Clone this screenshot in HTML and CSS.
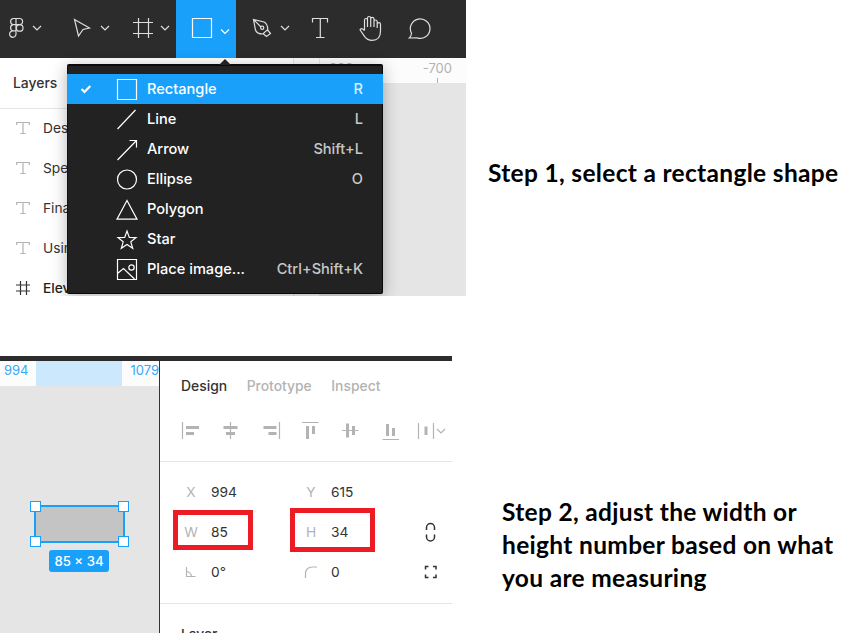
FILE: index.html
```html
<!DOCTYPE html>
<html lang="en">
<head>
<meta charset="utf-8">
<title>Measuring with a rectangle</title>
<link rel="stylesheet" href="styles.css">
</head>
<body>
<main class="guide">
  <section class="step step-one">
    <div class="editor">
      <nav class="toolbar">
        <svg class="tool" width="56" height="58" viewBox="0 0 56 58"><path d="M16 18.5h-3a3.2 3.2 0 0 0 0 6.2h3zM16 18.5h3.500a3.100 3.100 0 0 1 0 6.200H16M16 24.700h-3a3.200 3.200 0 0 0 0 6.200h3zM16 30.900h-3a3.200 3.200 0 1 0 3 3.200z"/><circle cx="19.700" cy="27.900" r="3.300"/><path d="M33 26l4 4 4-4"/></svg>
        <svg class="tool" width="60" height="58" viewBox="56 0 60 58"><path d="M74.500 19.500l15 8.500-6.500 1.500-4.500 6.500zM101 26l4 4 4-4"/></svg>
        <svg class="tool" width="60" height="58" viewBox="116 0 60 58"><path d="M138.500 18v20M148.500 18v20M133 22.500h20M133 33.500h20M161 26l4 4 4-4"/></svg>
        <svg class="tool tool-active" width="60" height="58" viewBox="176 0 60 58"><path d="M192.500 18.500h19v19h-19zM221 29.500l4 4 4-4"/></svg>
        <svg class="tool" width="60" height="58" viewBox="236 0 60 58"><path d="M253.500 19.500l10.500 2.500c2.500 1 3.500 3 3.800 7.500l-5 4.500c-4 0-6.500-1.500-7.300-4zM253.500 19.500l7.500 7.500M267.500 30l3 3.500-4 3-3.500-3"/><circle cx="262.200" cy="27.800" r="1.600"/><path d="M281 26l4 4 4-4"/></svg>
        <svg class="tool" width="49" height="58" viewBox="296 0 49 58"><path d="M312.500 22.500v-4h15v4M320.300 18.500v19M316 37.500h8.500"/></svg>
        <svg class="tool" width="50" height="58" viewBox="345 0 50 58"><path d="M364.500 30.500V20.300q0-1.800 1.500-1.800t1.500 1.800V27M367.500 20v-2q0-1.500 1.600-1.500t1.600 1.500v9M370.700 19q0-1.600 1.600-1.600T374 19v8M374 21.500q.2-1.500 1.600-1.500t1.600 1.500V28M377.200 24q.3-1.400 1.800-1.400t1.500 1.600V31c0 6-3 9.300-8.300 9.300-4 0-6-1.500-7.700-4l-4.500-6.500c.8-1.800 2.500-1.600 4.500.7"/></svg>
        <svg class="tool" width="50" height="58" viewBox="395 0 50 58"><path d="M411.500 33.200A9.800 9.800 0 1 1 417 37.900L409.300 38q2-2 2.200-4.800z"/></svg>
      </nav>
      <div class="workspace">
        <aside class="layers">
          <h2 class="layers-title">Layers</h2>
          <div class="layer"><svg class="layer-icon" width="14" height="14"><path d="M.7 4V1.500h12.600V4M7 1.500v11M4.500 12.500h5"/></svg>Design system</div>
          <div class="layer"><svg class="layer-icon" width="14" height="14"><path d="M.7 4V1.500h12.600V4M7 1.500v11M4.500 12.500h5"/></svg>Specs</div>
          <div class="layer"><svg class="layer-icon" width="14" height="14"><path d="M.7 4V1.500h12.600V4M7 1.500v11M4.500 12.500h5"/></svg>Final</div>
          <div class="layer"><svg class="layer-icon" width="14" height="14"><path d="M.7 4V1.500h12.600V4M7 1.500v11M4.500 12.500h5"/></svg>Using</div>
          <div class="layer layer-frame"><svg class="layer-icon" width="14" height="14"><path d="M4.500 0v14M10.500 0v14M0 4h14M0 10h14"/></svg>Elevation</div>
        </aside>
        <div class="side-ruler"></div>
        <div class="canvas">
          <div class="ruler"><span class="ruler-mark">-800</span><span class="ruler-mark">-700</span></div>
        </div>
      </div>
      <div class="menu">
        <div class="menu-item menu-item-active"><svg class="check" width="12" height="12"><path d="M1.500 6l3 3L10.300 3"/></svg><svg class="shape" width="22" height="22"><path d="M1.500 .5h19v20h-19z"/></svg><span class="name">Rectangle</span><kbd>R</kbd></div>
        <div class="menu-item"><svg class="shape" width="22" height="22"><path d="M1.500 20l18-19"/></svg><span class="name">Line</span><kbd>L</kbd></div>
        <div class="menu-item"><svg class="shape" width="22" height="22"><path d="M1.500 21L20 2M13.500 1.500h7v7"/></svg><span class="name">Arrow</span><kbd>Shift+L</kbd></div>
        <div class="menu-item"><svg class="shape" width="22" height="22"><circle cx="11" cy="10.500" r="9.500"/></svg><span class="name">Ellipse</span><kbd>O</kbd></div>
        <div class="menu-item"><svg class="shape" width="22" height="22"><path d="M11 1.500L21 20.200H1z"/></svg><span class="name">Polygon</span></div>
        <div class="menu-item"><svg class="shape" width="22" height="22"><path d="M11 2l2.300 6.400 6.700.2-5.200 4.200 1.900 6.500L11 15.500l-5.700 3.800 1.900-6.500L2 8.600l6.700-.2z"/></svg><span class="name">Star</span></div>
        <div class="menu-item"><svg class="shape" width="22" height="22"><path d="M1.500 .5h19v20h-19zM1.500 14.500l6-5L18.500 20"/><circle cx="15.500" cy="8.500" r="2.700"/></svg><span class="name">Place image...</span><kbd>Ctrl+Shift+K</kbd></div>
      </div>
    </div>
    <p class="caption caption-one">Step 1, select a rectangle shape</p>
  </section>

  <section class="step step-two">
    <div class="inspector">
      <div class="preview">
        <div class="preview-ruler"><span class="from">994</span><span class="range"></span><span class="to">1079</span></div>
        <div class="selection">
          <i class="handle tl"></i><i class="handle tr"></i><i class="handle bl"></i><i class="handle br"></i>
        </div>
        <span class="size">85 × 34</span>
      </div>
      <div class="panel">
        <div class="tabs"><span class="tab tab-active">Design</span><span class="tab">Prototype</span><span class="tab">Inspect</span></div>
        <svg class="align" width="292" height="60" viewBox="160 401 292 60">
          <path class="thin" d="M182.500 422v17M230.500 422v17M279.500 422v17M302 422.500h16.500M342 430.500h16.500M382.500 439.500h16.500M418.500 423v16M433.500 423v16"/>
          <path class="bars" d="M186 427.500h13M186 433.500h8M223.500 427.500h14M226 433.500h9M263.500 427.500h13M268.500 433.500h8M307.500 426v13M313.500 426v8M347.500 423.500v14M353.500 426v9M387.500 424v12M393.500 428v8M426 426.500v8.500"/>
          <path class="thin" d="M437 429l4 4 4-4"/>
        </svg>
        <div class="fields">
          <div class="field"><b>X</b>994</div><div class="field"><b>Y</b>615</div><span></span>
          <div class="field"><b>W</b>85<i class="mark mark-w"></i></div><div class="field"><b>H</b>34<i class="mark mark-h"></i></div>
          <svg class="action" width="20" height="24"><path d="M6.500 10V7.500a4 4 0 0 1 8 0V10M6.500 14.500V17a4 4 0 0 0 8 0v-2.500"/></svg>
          <div class="field"><svg class="glyph" width="14" height="14"><path d="M2.500 2v9.500h9M2.500 6.500q4.500.5 5 5"/></svg>0°</div>
          <div class="field"><svg class="glyph" width="14" height="14"><path d="M1.500 13V9q0-7 7-7H13"/></svg>0</div>
          <svg class="action" width="20" height="20"><path d="M5.500 7.500v-3h3M13 4.500h3v3M5.500 12.500v3h3M13 15.500h3v-3"/></svg>
        </div>
        <h3 class="panel-title">Layer</h3>
      </div>
    </div>
    <p class="caption caption-two">Step 2, adjust the width or<br>height number based on what<br>you are measuring</p>
  </section>
</main>
</body>
</html>
```

FILE: styles.css
```css
* { box-sizing: border-box; }
body { margin: 0; background: #fff; font-family: Inter, "Liberation Sans", sans-serif; color: #333; }
svg { display: block; flex: none; fill: none; }
.guide { width: 847px; height: 633px; overflow: hidden; display: flex; flex-direction: column; gap: 60px; }
.step { display: flex; flex: none; }
.step-one { height: 296px; }
.step-two { height: 277px; }

.editor { position: relative; width: 466px; height: 296px; flex: none; overflow: hidden; }
.toolbar { display: flex; height: 58px; background: #2c2c2c; }
.tool { stroke: #dedede; stroke-width: 1.2; }
.tool-active { background: #18a0fb; stroke: #fff; }
.workspace { display: flex; height: 238px; }
.layers { width: 294px; border-right: 1px solid #e5e5e5; overflow: hidden; }
.layers-title { margin: 0; height: 51px; line-height: 50px; padding-left: 13px; font-size: 13.9px; font-weight: 500; border-bottom: 1px solid #e5e5e5; }
.layer { display: flex; align-items: center; gap: 13px; height: 40px; padding-left: 16px; font-size: 13.75px; }
.layer:nth-child(2) { margin-top: -1px; }
.layer-icon { stroke: #b3b3b3; stroke-width: 1.2; }
.layer-frame { font-weight: 500; color: #222; }
.layer-frame .layer-icon { stroke: #333; }
.side-ruler { width: 26px; background: #fcfcfc; border-right: 1px solid #e8e8e8; }
.canvas { flex: 1; background: #e5e5e5; }
.ruler { display: flex; justify-content: space-between; height: 25px; background: #fcfcfc; padding: 0 14px 0 3px; }
.ruler-mark { display: flex; flex-direction: column; justify-content: space-between; align-items: center; font-size: 13px; line-height: 20px; color: #b3b3b3; }
.ruler-mark::after { content: ""; width: 1px; height: 5px; background: #b3b3b3; }

.menu { position: absolute; left: 67px; top: 64px; width: 316px; height: 230px; padding: 8px 0; background: #222; border: solid #0a0a0a; border-width: 2px 1px 1px; border-left-color: #111; border-radius: 2px; box-shadow: 0 3px 16px rgba(0, 0, 0, .3); color: #fff; }
.menu::before { content: ""; position: absolute; left: 151px; top: -7px; border: solid transparent; border-width: 0 6px 6px; border-bottom-color: #222; }
.menu-item { display: flex; align-items: center; height: 30px; margin: 0 -1px; padding: 0 20px 0 49px; font-size: 14.6px; font-weight: 500; }
.menu-item-active { background: #18a0fb; padding-left: 13px; }
.check { margin-right: 24px; stroke: #fff; stroke-width: 2.2; }
.shape { stroke: #fff; stroke-width: 1.2; margin-right: 9px; position: relative; top: 1px; }
.menu kbd { margin-left: auto; font: inherit; color: #c8c8c8; }
.menu .menu-item-active kbd { color: #d8f0ff; }

.caption { margin: 0; font-family: Lato, sans-serif; font-weight: 700; font-size: 24.5px; letter-spacing: .32px; line-height: 33px; color: #000; white-space: nowrap; }
.caption-one { padding: 156px 0 0 22px; }
.caption-two { padding: 139px 0 0 50px; }

.inspector { display: flex; width: 452px; flex: none; border-top: 5px solid #2c2c2c; overflow: hidden; }
.preview { width: 160px; flex: none; background: #e5e5e5; border-right: 1px solid #333; overflow: hidden; }
.preview-ruler { display: flex; height: 25px; line-height: 19px; font-size: 13px; color: #35a9f8; background: #fcfcfc; }
.from { width: 36px; padding-left: 4px; }
.range { width: 87px; background: #cce8fd; }
.to { padding-left: 8px; }
.selection { position: relative; width: 91px; height: 38px; margin: 119px 0 0 34px; background: #c4c4c4; border: 2px solid #18a0fb; }
.handle { position: absolute; width: 11px; height: 11px; background: #fff; border: 1.5px solid #18a0fb; }
.tl, .bl { left: -6px; }
.tr, .br { right: -6px; }
.tl, .tr { top: -6px; }
.bl, .br { bottom: -6px; }
.size { display: block; width: 60px; height: 22px; margin: 7px 0 0 49px; border-radius: 3px; background: #18a0fb; color: #fff; font-size: 13.2px; font-weight: 500; line-height: 23px; text-align: center; }
.panel { flex: 1; background: #fff; }
.tabs { display: flex; gap: 19.5px; height: 40px; padding-left: 21px; line-height: 50px; font-size: 13.9px; font-weight: 500; color: #b3b3b3; }
.tab-active { color: #333; }
.align { stroke: #b3b3b3; }
.thin { stroke-width: 1.2; }
.bars { stroke-width: 3; }
.fields { display: grid; grid-template-columns: 120px 120px 20px; grid-auto-rows: 40px; align-items: center; height: 143px; padding: 10px 0 0 21px; border: solid #e5e5e5; border-width: 1px 0; font-size: 13.75px; }
.field { position: relative; display: flex; align-items: center; height: 40px; }
.field b { width: 20px; margin-right: 10px; text-align: center; font-weight: 400; color: #b3b3b3; }
.glyph { stroke: #b3b3b3; stroke-width: 1.2; margin: 0 13px 0 3px; }
.action { stroke: #333; stroke-width: 1.5; margin-left: -1px; }
.mark { position: absolute; border: 5px solid #ed1c24; }
.mark-w { left: -8px; top: -2px; width: 80px; height: 40px; }
.mark-h { left: -11px; top: -4px; width: 85px; height: 44px; }
.panel-title { margin: 20px 0 0 21px; font-size: 13.75px; line-height: 20px; font-weight: 500; white-space: nowrap; }
```
